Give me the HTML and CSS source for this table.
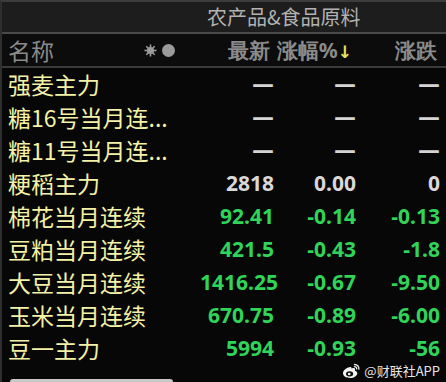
FILE: index.html
```html
<!DOCTYPE html>
<html lang="zh">
<head>
<meta charset="utf-8">
<link rel="stylesheet" href="styles.css">
</head>
<body>
<div class="screen">
  <div class="title-bar"><span class="title">农产品&amp;食品原料</span></div>
  <div class="head row">
    <div class="name-cell">
      <span class="hname">名称</span>
      <span class="icons">
        <svg class="sun" width="13" height="13" viewBox="0 0 13 13"><g stroke="#9a9a9a" stroke-width="1.6"><line x1="6.5" y1="0.5" x2="6.5" y2="12.5"/><line x1="0.5" y1="6.5" x2="12.5" y2="6.5"/><line x1="2.3" y1="2.3" x2="10.7" y2="10.7"/><line x1="10.7" y1="2.3" x2="2.3" y2="10.7"/></g><circle cx="6.5" cy="6.5" r="3.6" fill="#9a9a9a"/></svg>
        <span class="dot"></span>
      </span>
    </div>
    <div class="num hcell">最新</div>
    <div class="num hcell">涨幅%<span class="arrow">↓</span></div>
    <div class="num hcell">涨跌</div>
  </div>
  <div class="body">
    <div class="row"><div class="name">强麦主力</div><div class="num dash">—</div><div class="num dash">—</div><div class="num dash">—</div></div>
    <div class="row"><div class="name">糖16号当月连...</div><div class="num dash">—</div><div class="num dash">—</div><div class="num dash">—</div></div>
    <div class="row"><div class="name">糖11号当月连...</div><div class="num dash">—</div><div class="num dash">—</div><div class="num dash">—</div></div>
    <div class="row"><div class="name">粳稻主力</div><div class="num flat">2818</div><div class="num flat">0.00</div><div class="num flat">0</div></div>
    <div class="row"><div class="name">棉花当月连续</div><div class="num down">92.41</div><div class="num down">-0.14</div><div class="num down">-0.13</div></div>
    <div class="row"><div class="name">豆粕当月连续</div><div class="num down">421.5</div><div class="num down">-0.43</div><div class="num down">-1.8</div></div>
    <div class="row"><div class="name">大豆当月连续</div><div class="num down">1416.25</div><div class="num down">-0.67</div><div class="num down">-9.50</div></div>
    <div class="row"><div class="name">玉米当月连续</div><div class="num down">670.75</div><div class="num down">-0.89</div><div class="num down">-6.00</div></div>
    <div class="row"><div class="name">豆一主力</div><div class="num down">5994</div><div class="num down">-0.93</div><div class="num down">-56</div></div>
  </div>
  <div class="scrollbar"></div>
  <div class="watermark">
    <svg width="19" height="16" viewBox="0 0 19 16"><path d="M7.5 4.2C4 4.8 1 7.5 1 10.3 1 13.2 4.3 15 8 15c4.2 0 7.3-2.3 7.3-4.8 0-1.6-1.4-2.3-2.4-2.5.6-1.4.3-2.5-1-2.7-1.1-.1-2.4.6-2.4.6.3-1.300-.7-2-2-1.4z" fill="#f2f2f2"/><ellipse cx="7.6" cy="10.8" rx="3.6" ry="2.6" fill="#111"/><circle cx="7.2" cy="11" r="1.3" fill="#f2f2f2"/><path d="M12.5 1.5c2.6 0 4.6 2 4.4 4.6M12.4 3.6c1.3 0 2.4 1 2.3 2.3" stroke="#f2f2f2" stroke-width="1.3" fill="none" stroke-linecap="round"/></svg>
    <span>@财联社APP</span>
  </div>
</div>
</body>
</html>
```
FILE: styles.css
```css
html, body {
  margin: 0;
  padding: 0;
  background: #070707;
}
.screen {
  width: 444px;
  height: 380px;
  position: relative;
  overflow: hidden;
  border-top: 2px solid #3c3c3c;
  border-left: 2px solid #2e2e2e;
  background: #070707;
  font-family: "Noto Sans CJK SC", "Noto Sans", sans-serif;
}
.title-bar {
  height: 30px;
  background: #1d1d1d;
  border-bottom: 2px solid #4a4a4a;
  display: flex;
  align-items: center;
  padding-left: 205px;
}
.title {
  font-size: 20px;
  color: #b2b2b2;
  line-height: 1;
}
.row {
  display: grid;
  grid-template-columns: 192px 74px 82px 84px;
  padding-left: 6px;
  height: 33px;
  align-items: center;
}
.head {
  height: 32px;
  background: #0c0c0c;
  border-bottom: 2px solid #3a3a3a;
}
.name-cell {
  display: flex;
  align-items: center;
}
.hname {
  font-size: 23px;
  color: #8a8a8a;
  line-height: 1;
}
.icons {
  display: flex;
  align-items: center;
  gap: 5px;
  margin-left: 90px;
}
.sun { display: block; }
.dot {
  width: 13px;
  height: 13px;
  border-radius: 50%;
  background: #9a9a9a;
}
.hcell {
  font-size: 23px;
  color: #8a8a8a;
  font-weight: normal;
  font-family: "Noto Sans CJK SC", sans-serif;
  line-height: 1;
}
.hcell:nth-child(2) { padding-right: 4px; }
.hcell:nth-child(3) { padding-right: 4px; }
.hcell:last-child { padding-right: 3px; }
.arrow {
  color: #e8e060;
  font-size: 17px;
  font-family: "DejaVu Sans", sans-serif;
}
.name {
  font-size: 23px;
  color: #f4f2a6;
  white-space: nowrap;
  line-height: 1;
}
.num {
  text-align: right;
  font-family: "Noto Sans", "Liberation Sans", sans-serif;
  font-weight: bold;
  font-size: 21px;
  line-height: 1;
}
.dash {
  color: #d4d4d4;
  font-family: "DejaVu Sans", sans-serif;
  font-weight: bold;
  font-size: 22px;
}
.flat { color: #d8d8d8; }
.down { color: #30d458; }
.scrollbar {
  position: absolute;
  left: 8px;
  top: 377px;
  width: 163px;
  height: 8px;
  border-radius: 3px;
  background: #c8c8c8;
}
.watermark {
  position: absolute;
  right: 6px;
  bottom: 3px;
  display: flex;
  align-items: center;
  gap: 3px;
  font-family: "Noto Sans CJK SC", sans-serif;
  font-size: 13px;
  line-height: 16px;
  color: #e6e6e6;
  text-shadow: 0 0 2px #000;
}
```
